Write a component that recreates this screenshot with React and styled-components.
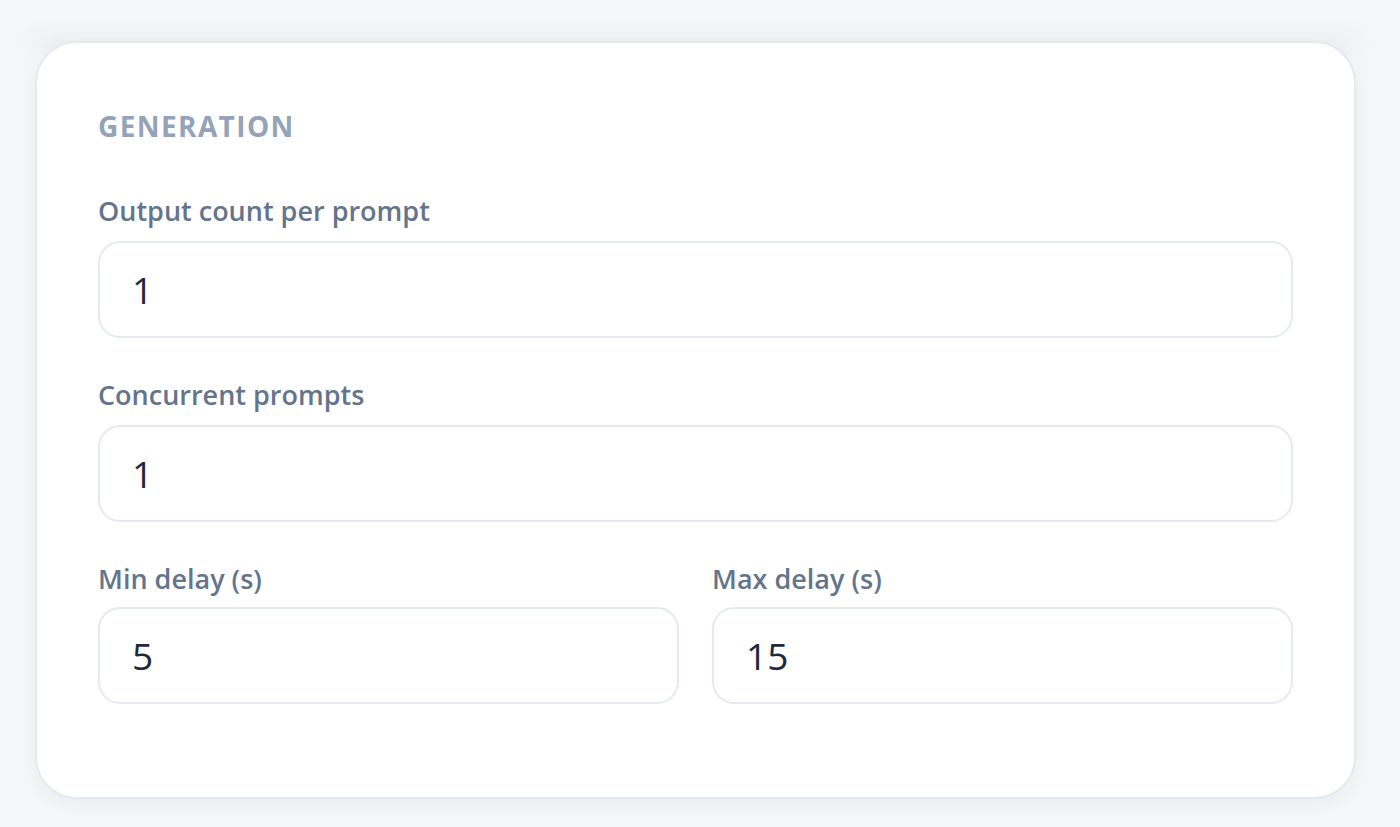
import React, { useState } from 'react';
import styled, { createGlobalStyle } from 'styled-components';

const GlobalStyle = createGlobalStyle`
  html, body {
    margin: 0;
    padding: 0;
    background: #f6f7f9;
    font-family: "Open Sans", "Noto Sans", sans-serif;
  }
  * {
    box-sizing: border-box;
  }
`;

const Page = styled.div`
  min-height: 100vh;
  padding: 0 44px 29px 35px;
`;

// bottom edge of the card above, only its shadow is visible
const PrevCardEdge = styled.div`
  height: 0;
  margin-bottom: 41px;
  box-shadow: 0 0 26px 8px rgba(15, 23, 42, 0.05);
`;

const Card = styled.section`
  background: #ffffff;
  border: 2px solid #e5e9f1;
  border-radius: 42px;
  box-shadow: 0 6px 22px rgba(15, 23, 42, 0.05);
  padding: 67px 61px 93px;
`;

const SectionTitle = styled.h2`
  margin: 0 0 51px;
  font-size: 28px;
  line-height: 1.2;
  font-weight: 700;
  letter-spacing: 1.4px;
  text-transform: uppercase;
  color: #94a3b8;
`;

const Fields = styled.div`
  display: flex;
  flex-direction: column;
  gap: 41px;
`;

const Row = styled.div`
  display: grid;
  grid-template-columns: ${(p) => (p.cols ? `repeat(${p.cols}, 1fr)` : '1fr')};
  gap: 33px;
`;

const Field = styled.label`
  display: flex;
  flex-direction: column;
  gap: ${(p) => (p.tight ? '11px' : '14px')};
`;

const Label = styled.span`
  font-size: 27px;
  line-height: 1.2;
  font-weight: 600;
  color: #64748b;
`;

const Input = styled.input`
  width: 100%;
  height: 97px;
  padding: 0 32px;
  border: 2px solid #e5e9f1;
  border-radius: 22px;
  background: #ffffff;
  font-family: "Open Sans", "Noto Sans", sans-serif;
  font-size: 37px;
  color: #1e293b;
  outline: none;
  &:focus {
    border-color: #cbd5e1;
  }
`;

const NumberField = ({ label, value, onChange, tight }) => (
  <Field tight={tight}>
    <Label>{label}</Label>
    <Input type="text" inputMode="numeric" value={value} onChange={(e) => onChange(e.target.value)} />
  </Field>
);

const App = () => {
  const [outputCount, setOutputCount] = useState('1');
  const [concurrent, setConcurrent] = useState('1');
  const [minDelay, setMinDelay] = useState('5');
  const [maxDelay, setMaxDelay] = useState('15');

  return (
    <>
      <GlobalStyle />
      <Page>
        <PrevCardEdge />
        <Card>
          <SectionTitle>Generation</SectionTitle>
          <Fields>
            <Row>
              <NumberField label="Output count per prompt" value={outputCount} onChange={setOutputCount} />
            </Row>
            <Row>
              <NumberField label="Concurrent prompts" value={concurrent} onChange={setConcurrent} />
            </Row>
            <Row cols={2}>
              <NumberField label="Min delay (s)" value={minDelay} onChange={setMinDelay} tight />
              <NumberField label="Max delay (s)" value={maxDelay} onChange={setMaxDelay} tight />
            </Row>
          </Fields>
        </Card>
      </Page>
    </>
  );
};

export default App;
